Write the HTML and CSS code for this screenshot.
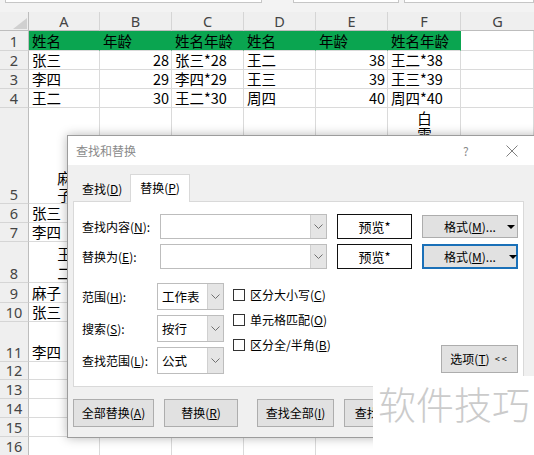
FILE: index.html
```html
<!DOCTYPE html>
<html>
<head>
<meta charset="utf-8">
<title>查找和替换</title>
<link rel="stylesheet" href="styles.css">
</head>
<body>
<div class="app">
  <div class="topbar">
    <div class="box box1"></div>
    <div class="box box2"></div>
    <div class="box box3"></div>
  </div>
  <div class="sheet">
    <div class="hd corner"><svg width="14" height="11" viewBox="0 0 14 11"><polygon points="14,0 14,11 0,11" fill="#d0d0d0"/></svg></div>
    <div class="hd col">A</div><div class="hd col">B</div><div class="hd col">C</div><div class="hd col">D</div><div class="hd col">E</div><div class="hd col">F</div><div class="hd col last">G</div>

    <div class="rh">1</div><div class="c g">姓名</div><div class="c g">年龄</div><div class="c g">姓名年龄</div><div class="c g">姓名</div><div class="c g">年龄</div><div class="c g">姓名年龄</div><div class="c"></div>
    <div class="rh">2</div><div class="c">张三</div><div class="c n">28</div><div class="c">张三*28</div><div class="c">王二</div><div class="c n">38</div><div class="c">王二*38</div><div class="c"></div>
    <div class="rh">3</div><div class="c">李四</div><div class="c n">29</div><div class="c">李四*29</div><div class="c">王三</div><div class="c n">39</div><div class="c">王三*39</div><div class="c"></div>
    <div class="rh">4</div><div class="c">王二</div><div class="c n">30</div><div class="c">王二*30</div><div class="c">周四</div><div class="c n">40</div><div class="c">周四*40</div><div class="c"></div>
    <div class="rh">5</div><div class="c wrap"><span class="stack">麻子</span></div><div class="c"></div><div class="c"></div><div class="c"></div><div class="c"></div><div class="c vt"><span class="stack">白雪公主与七个小矮人</span></div><div class="c"></div>
    <div class="rh">6</div><div class="c">张三</div><div class="c"></div><div class="c"></div><div class="c"></div><div class="c"></div><div class="c"></div><div class="c"></div>
    <div class="rh">7</div><div class="c">李四</div><div class="c"></div><div class="c"></div><div class="c"></div><div class="c"></div><div class="c"></div><div class="c"></div>
    <div class="rh">8</div><div class="c wrap w8"><span class="stack">王二</span></div><div class="c"></div><div class="c"></div><div class="c"></div><div class="c"></div><div class="c"></div><div class="c"></div>
    <div class="rh">9</div><div class="c">麻子</div><div class="c"></div><div class="c"></div><div class="c"></div><div class="c"></div><div class="c"></div><div class="c"></div>
    <div class="rh">10</div><div class="c">张三</div><div class="c"></div><div class="c"></div><div class="c"></div><div class="c"></div><div class="c"></div><div class="c"></div>
    <div class="rh">11</div><div class="c">李四</div><div class="c"></div><div class="c"></div><div class="c"></div><div class="c"></div><div class="c"></div><div class="c"></div>
    <div class="rh">12</div><div class="c"></div><div class="c"></div><div class="c"></div><div class="c"></div><div class="c"></div><div class="c"></div><div class="c"></div>
    <div class="rh">13</div><div class="c"></div><div class="c"></div><div class="c"></div><div class="c"></div><div class="c"></div><div class="c"></div><div class="c"></div>
    <div class="rh">14</div><div class="c"></div><div class="c"></div><div class="c"></div><div class="c"></div><div class="c"></div><div class="c"></div><div class="c"></div>
    <div class="rh">15</div><div class="c"></div><div class="c"></div><div class="c"></div><div class="c"></div><div class="c"></div><div class="c"></div><div class="c"></div>
    <div class="rh">16</div><div class="c"></div><div class="c"></div><div class="c"></div><div class="c"></div><div class="c"></div><div class="c"></div><div class="c"></div>
  </div>

  <div class="dialog">
    <div class="titlebar">
      <span class="title">查找和替换</span>
      <span class="help">?</span>
      <svg class="close" width="12" height="12" viewBox="0 0 12 12"><path d="M0.5 0.5L11.5 11.5M11.5 0.5L0.5 11.5" stroke="#808080" stroke-width="1" fill="none"/></svg>
    </div>
    <div class="dbody">
      <div class="tabs">
        <div class="tab">查找(<u>D</u>)</div>
        <div class="tab active">替换(<u>P</u>)</div>
      </div>
      <div class="panel">
        <div class="frow">
          <span class="flabel">查找内容(<u>N</u>):</span>
          <div class="combo"><div class="cfield"></div><div class="cbtn"><svg width="9" height="5" viewBox="0 0 9 5"><polyline points="0.5,0.5 4.5,4.5 8.5,0.5" fill="none" stroke="#707070" stroke-width="1"/></svg></div></div>
          <div class="preview">预览*</div>
          <div class="fmt"><span class="ftext">格式(<u>M</u>)...</span><span class="caret"></span></div>
        </div>
        <div class="frow second">
          <span class="flabel">替换为(<u>E</u>):</span>
          <div class="combo"><div class="cfield"></div><div class="cbtn"><svg width="9" height="5" viewBox="0 0 9 5"><polyline points="0.5,0.5 4.5,4.5 8.5,0.5" fill="none" stroke="#707070" stroke-width="1"/></svg></div></div>
          <div class="preview">预览*</div>
          <div class="fmt focus"><span class="ftext">格式(<u>M</u>)...</span><span class="sep"></span><span class="caret"></span></div>
        </div>
        <div class="opts">
          <div class="selcol">
            <div class="srow"><span class="slabel">范围(<u>H</u>):</span><div class="sel"><span class="sval">工作表</span><div class="cbtn"><svg width="9" height="5" viewBox="0 0 9 5"><polyline points="0.5,0.5 4.5,4.5 8.5,0.5" fill="none" stroke="#707070" stroke-width="1"/></svg></div></div></div>
            <div class="srow"><span class="slabel">搜索(<u>S</u>):</span><div class="sel"><span class="sval">按行</span><div class="cbtn"><svg width="9" height="5" viewBox="0 0 9 5"><polyline points="0.5,0.5 4.5,4.5 8.5,0.5" fill="none" stroke="#707070" stroke-width="1"/></svg></div></div></div>
            <div class="srow"><span class="slabel">查找范围(<u>L</u>):</span><div class="sel"><span class="sval">公式</span><div class="cbtn"><svg width="9" height="5" viewBox="0 0 9 5"><polyline points="0.5,0.5 4.5,4.5 8.5,0.5" fill="none" stroke="#707070" stroke-width="1"/></svg></div></div></div>
          </div>
          <div class="checks">
            <div class="chk"><span class="cb"></span>区分大小写(<u>C</u>)</div>
            <div class="chk"><span class="cb"></span>单元格匹配(<u>O</u>)</div>
            <div class="chk"><span class="cb"></span>区分全/半角(<u>B</u>)</div>
          </div>
          <div class="optbtn">选项(<u>T</u>) <span class="lt">&lt;&lt;</span></div>
        </div>
      </div>
      <div class="btns">
        <div class="btn b1">全部替换(<u>A</u>)</div>
        <div class="btn b2">替换(<u>R</u>)</div>
        <div class="btn b3">查找全部(<u>I</u>)</div>
        <div class="btn b4">查找下一个(<u>F</u>)</div>
      </div>
    </div>
  </div>

  <div class="watermark">软件技巧</div>
</div>
</body>
</html>
```

FILE: styles.css
```css
* { box-sizing: border-box; margin: 0; padding: 0; }
html, body { width: 534px; height: 455px; overflow: hidden; background: #fff; }
body { font-family: "Noto Sans CJK SC", "Noto Sans", sans-serif; color: #000; }
.app { position: relative; width: 534px; height: 455px; overflow: hidden; }

/* top strip (bottom of name box / formula bar) */
.topbar { height: 12px; background: #f3f3f3; display: flex; align-items: flex-start; }
.box { height: 3px; background: #fff; border: 1px solid #c6c6c6; border-top: none; }
.box1 { margin-left: 5px; width: 266px; }
.box2 { margin-left: 31px; width: 109px; }
.box3 { margin-left: 5px; width: 130px; flex: none; }

/* sheet grid */
.sheet {
  display: grid;
  grid-template-columns: 29px 71px 72px 72px 72px 72px 73px 73px;
  grid-template-rows: 19px 20px 19px 19px 19px 96px 19px 19px 41px 20px 19px 40px 18px 19px 19px 19px 19px;
}
.hd {
  background: #efefef;
  border-right: 1px solid #d5d5d5;
  border-bottom: 1px solid #bdbdbd;
  display: flex; align-items: center; justify-content: center;
  font-family: "Noto Sans", "Liberation Sans", sans-serif;
  font-size: 14.5px; color: #444; line-height: 18px;
}
.corner { align-items: flex-end; justify-content: flex-end; padding: 0 1px 1px 0; border-right-color: #bdbdbd; }
.col.last { border-right: none; }
.rh {
  background: #efefef;
  border-right: 1px solid #bdbdbd;
  border-bottom: 1px solid #d5d5d5;
  display: flex; align-items: flex-end; justify-content: center;
  font-family: "Noto Sans", "Liberation Sans", sans-serif;
  font-size: 14.5px; color: #444; line-height: 18px;
}
.c {
  border-right: 1px solid #dadada;
  border-bottom: 1px solid #dadada;
  display: flex; align-items: flex-end;
  padding: 0 2px 0 3px;
  font-size: 14.5px; line-height: 18px;
  white-space: nowrap;
}
.c.g { background: #0aa550; border-right-color: #0aa550; }
.c.n { justify-content: flex-end; }
.stack { display: block; width: 15px; white-space: normal; word-break: break-all; text-align: center; }
.c.wrap { justify-content: center; line-height: 17px; }
.c.w8 { line-height: 19px; }
.c.vt { align-items: flex-start; justify-content: center; padding-top: 2px; line-height: 16px; overflow: hidden; }

/* dialog */
.dialog {
  position: absolute; left: 67px; top: 135px;
  width: 480px; height: 303px;
  border: 1px solid #9c9c9c;
  background: #f0f0f0;
  box-shadow: 0 0 10px rgba(0,0,0,0.28);
  font-size: 12px; line-height: 16px;
  white-space: nowrap;
}
.titlebar { height: 29px; background: #fff; display: flex; align-items: center; padding-left: 8px; }
.title { width: 387px; color: #8a8a8a; font-size: 12px; }
.help { width: 43px; color: #8a8a8a; font-size: 12px; }
.close { display: block; }
.dbody { padding: 9px 0 0 5px; }
.tabs { display: flex; align-items: flex-end; height: 27px; }
.tab { width: 57px; height: 25px; padding-left: 9px; display: flex; align-items: center; }
.tab.active {
  width: 60px; height: 28px; padding-left: 0; justify-content: center;
  background: #fff; border: 1px solid #d9d9d9; border-bottom: none;
  margin-bottom: -1px; position: relative; z-index: 1; padding-bottom: 1px;
}
.panel {
  width: 451px; height: 186px; background: #fff;
  border: 1px solid #d9d9d9;
  padding: 12px 5px 0 8px;
}
.frow { display: flex; align-items: center; height: 25px; }
.frow.second { margin-top: 5px; }
.flabel { width: 78px; }
.combo { width: 167px; height: 25px; border: 1px solid #bdbdbd; display: flex; background: #fff; }
.cfield { flex: 1; }
.cbtn { width: 16px; background: #e5e5e5; border-left: 1px solid #d0d0d0; display: flex; align-items: center; justify-content: center; }
.cbtn svg { display: block; }
.preview {
  margin-left: 10px; width: 75px; height: 25px; border: 1px solid #111;
  display: flex; align-items: center; justify-content: center; font-size: 13px;
}
.fmt {
  margin-left: 10px; width: 96px; height: 23px;
  background: #e1e1e1; border: 1px solid #adadad;
  display: flex; align-items: center; padding-left: 21px;
}
.ftext { width: 63px; }
.caret { width: 0; height: 0; border-left: 4px solid transparent; border-right: 4px solid transparent; border-top: 4px solid #000; }
.fmt.focus { border: 2px solid #1a70b8; padding-left: 20px; height: 25px; }
.fmt.focus .ftext { width: 53px; }
.sep { width: 1px; height: 19px; background: #8a8a8a; margin: 0 3px 0 10px; }

.opts { display: flex; margin-top: 14px; }
.selcol { display: flex; flex-direction: column; gap: 5px; }
.srow { display: flex; align-items: center; height: 27px; }
.slabel { width: 75px; }
.sel { width: 67px; height: 27px; border: 1px solid #bdbdbd; display: flex; background: #fff; }
.sval { flex: 1; padding-left: 4px; display: flex; align-items: center; font-size: 12.5px; }
.checks { margin-left: 9px; margin-top: -1px; display: flex; flex-direction: column; }
.chk { height: 25px; display: flex; align-items: center; }
.cb { width: 12px; height: 12px; border: 1px solid #333; background: #fff; margin-right: 5px; }
.optbtn {
  margin-left: auto; align-self: flex-end; margin-bottom: 1px;
  width: 77px; height: 28px; background: #e1e1e1; border: 1px solid #adadad;
  display: flex; align-items: center; justify-content: center;
}
.lt { font-size: 9px; letter-spacing: 2px; margin-left: 5px; }

.btns { display: flex; margin-top: 12px; gap: 10px; }
.btn {
  height: 28px; background: #e1e1e1; border: 1px solid #adadad;
  display: flex; align-items: center; justify-content: center;
}
.b1 { width: 81px; }
.b2 { width: 74px; }
.b3 { width: 77px; margin-left: 9px; }
.b4 { width: 96px; }

/* watermark overlay */
.watermark {
  position: absolute; left: 373px; top: 376px; width: 161px; height: 79px;
  background: #fff; color: #cbcbcb;
  font-size: 38px; font-weight: 300; line-height: 40px; padding: 7px 0 0 5px;
  white-space: nowrap;
}
```
